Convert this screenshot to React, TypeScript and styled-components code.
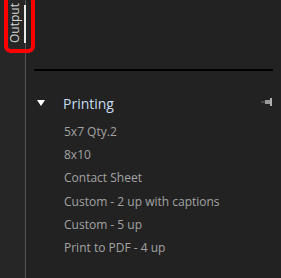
import React from 'react'
import styled, { createGlobalStyle } from 'styled-components'

const Global = createGlobalStyle`
  html, body { margin: 0; padding: 0; background: #222222; }
  body { font-family: "Open Sans", "Noto Sans", sans-serif; }
`

const presets = [
  '5x7 Qty.2',
  '8x10',
  'Contact Sheet',
  'Custom - 2 up with captions',
  'Custom - 5 up',
  'Print to PDF - 4 up',
]

const App: React.FC = () => {
  return (
    <>
      <Global />
      <Frame>
        <SideStrip>
          <TabLabel>Output</TabLabel>
          <TabMarker />
          <Highlight />
        </SideStrip>
        <Panel>
          <Rule />
          <Header>
            <Caret />
            <Title>Printing</Title>
            <PinIcon />
          </Header>
          <List>
            {presets.map((p) => (
              <Item key={p}>{p}</Item>
            ))}
          </List>
        </Panel>
      </Frame>
    </>
  )
}

const PinIcon: React.FC = () => (
  <PinSvg width="12" height="8" viewBox="0 0 12 8">
    <rect x="0" y="3.5" width="4" height="1" fill="#6a6a6a" />
    <rect x="4" y="2" width="5" height="4" fill="#9a9a9a" />
    <rect x="9" y="0" width="2" height="8" fill="#b0b0b0" />
  </PinSvg>
)

export default App

const Frame = styled.div`
  display: flex;
  width: 281px;
  height: 278px;
  background: #222222;
  overflow: hidden;
`

const SideStrip = styled.div`
  position: relative;
  width: 26px;
  flex-shrink: 0;
  background: #262626;
  border-right: 1px solid #555555;
  display: flex;
  justify-content: flex-start;
  padding-left: 8px;
  box-sizing: border-box;
`

const TabLabel = styled.div`
  writing-mode: vertical-rl;
  transform: rotate(180deg);
  font-size: 12px;
  color: #d6d6d6;
  height: 38px;
  margin-top: 5px;
  line-height: 13px;
  text-align: left;
`

const TabMarker = styled.div`
  position: absolute;
  left: 24px;
  top: 5px;
  width: 2px;
  height: 38px;
  background: #e8e8e8;
`

const Highlight = styled.div`
  position: absolute;
  left: 4px;
  top: -6px;
  width: 31px;
  height: 59px;
  border: 4px solid #ff0000;
  border-radius: 7px;
  box-sizing: border-box;
`

const Panel = styled.div`
  flex: 1;
  display: flex;
  flex-direction: column;
  padding: 69px 8px 0 8px;
`

const Rule = styled.div`
  height: 2px;
  background: #000000;
`

const Header = styled.div`
  display: flex;
  align-items: center;
  height: 18px;
  margin-top: 23px;
  padding-left: 3px;
`

const Caret = styled.div`
  width: 0;
  height: 0;
  border-left: 4.5px solid transparent;
  border-right: 4.5px solid transparent;
  border-top: 6px solid #ffffff;
  margin-right: 18px;
`

const Title = styled.div`
  flex: 1;
  font-size: 14px;
  color: #c7dcf0;
`

const PinSvg = styled.svg`
  margin-top: -2px;
`

const List = styled.div`
  display: flex;
  flex-direction: column;
  padding-left: 30px;
  margin-top: 8px;
`

const Item = styled.div`
  font-size: 12px;
  color: #a3a3a3;
  height: 23.2px;
  line-height: 23.2px;
  white-space: nowrap;
`
